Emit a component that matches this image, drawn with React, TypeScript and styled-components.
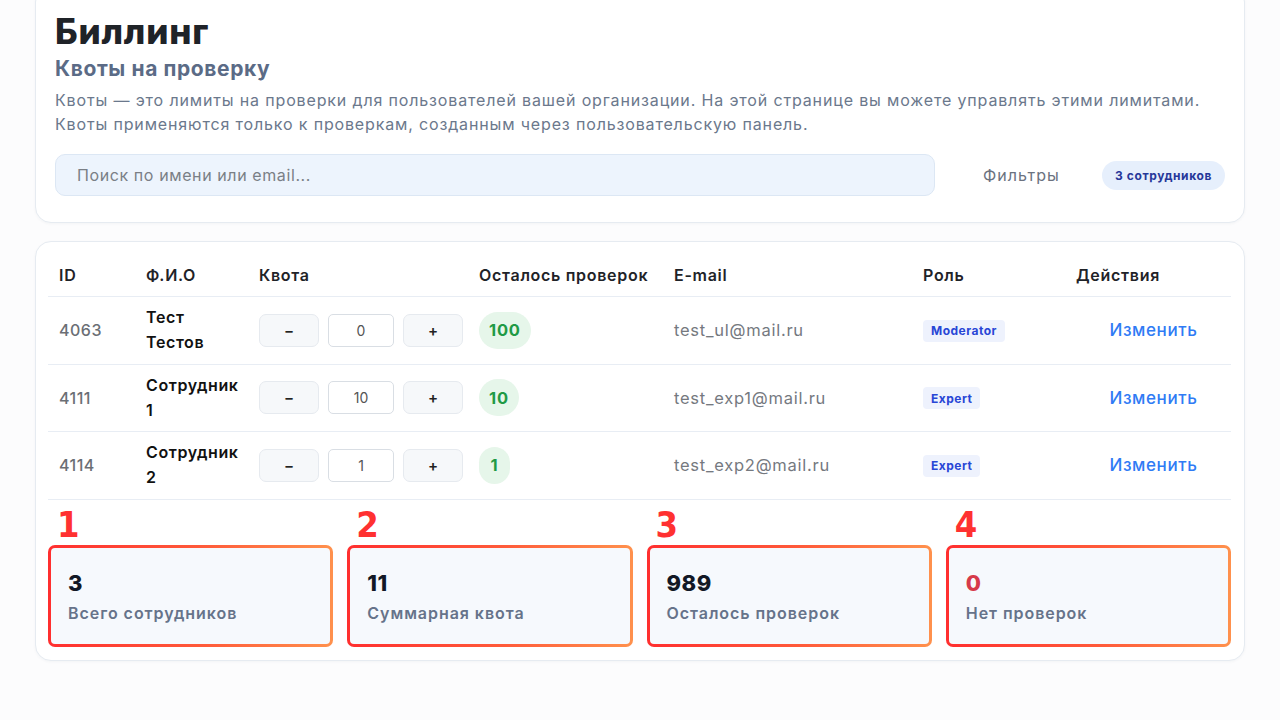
import React from 'react';
import styled, { createGlobalStyle } from 'styled-components';

const GlobalStyle = createGlobalStyle`
  html, body {
    margin: 0;
    padding: 0;
    background: #fcfcfd;
  }
  body {
    font-family: Inter, 'Noto Sans', sans-serif;
    color: #1f2328;
    letter-spacing: 0.5px;
  }
  * { box-sizing: border-box; }
`;

const Page = styled.div`
  padding: 0 35px 40px;
  display: flex;
  flex-direction: column;
  gap: 18px;
  margin-top: -14px;
`;

const Card = styled.section`
  background: #fff;
  border: 1px solid #e6ebf1;
  border-radius: 16px;
  box-shadow: 0 1px 3px rgba(20, 40, 80, 0.04);
`;

const HeaderCard = styled(Card)`
  padding: 23px 19px 26px 19px;
`;

const Title = styled.h1`
  margin: 0;
  font-size: 35px;
  line-height: 42px;
  font-weight: 800;
  letter-spacing: 0.8px;
  color: #1f2328;
`;

const Subtitle = styled.h2`
  margin: 4px 0 0;
  font-size: 21px;
  line-height: 26px;
  font-weight: 700;
  letter-spacing: 0.6px;
  color: #5b6b86;
`;

const Description = styled.p`
  margin: 6px 0 0;
  font-size: 16px;
  line-height: 24px;
  color: #6b788c;
  letter-spacing: 0.85px;
`;

const Toolbar = styled.div`
  margin-top: 18px;
  display: flex;
  align-items: center;
`;

const Search = styled.input`
  flex: 0 0 880px;
  height: 42px;
  border: 1px solid #dce7f4;
  background: #edf4fd;
  border-radius: 10px;
  padding: 0 21px;
  font-family: inherit;
  font-size: 16px;
  letter-spacing: 0.6px;
  color: #333;
  outline: none;
  &::placeholder { color: #7a7f86; }
`;

const FilterLabel = styled.span`
  margin-left: 48px;
  font-size: 16px;
  letter-spacing: 1px;
  color: #6b7280;
`;

const CountBadge = styled.span`
  margin-left: auto;
  background: #e6effc;
  color: #27389a;
  font-weight: 700;
  font-size: 12px;
  letter-spacing: 0.6px;
  padding: 0 13px;
  height: 29px;
  display: inline-flex;
  align-items: center;
  border-radius: 15px;
`;

const TableCard = styled(Card)`
  padding: 12px 13px 13px 12px;
`;

const cols = '87px 113px 220px 195px 249px 153px 1fr';

const HeadRow = styled.div`
  display: grid;
  grid-template-columns: ${cols};
  height: 43px;
  align-items: center;
  border-bottom: 1px solid #e8edf4;
`;

const HeadCell = styled.div`
  padding-left: 11px;
  font-size: 16px;
  font-weight: 600;
  letter-spacing: 0.7px;
  color: #1f2328;
  white-space: nowrap;
`;

const Row = styled.div`
  display: grid;
  grid-template-columns: ${cols};
  height: 67.5px;
  align-items: center;
  border-bottom: 1px solid #e8edf4;
`;

const Cell = styled.div<{ $center?: boolean }>`
  padding-left: 11px;
  font-size: 16px;
  text-align: ${p => (p.$center ? 'center' : 'left')};
`;

const IdCell = styled(Cell)`
  color: #6b6f75;
  font-weight: 500;
`;

const NameCell = styled(Cell)`
  font-weight: 600;
  color: #111;
  line-height: 25px;
  letter-spacing: 0.6px;
`;

const QuotaBox = styled.div`
  display: flex;
  align-items: center;
  gap: 9px;
`;

const StepButton = styled.button`
  width: 60px;
  height: 33px;
  border: 1px solid #e6eaef;
  background: #f6f8fa;
  border-radius: 7px;
  font-family: inherit;
  font-size: 15px;
  font-weight: 600;
  color: #222;
`;

const QuotaInput = styled.input`
  width: 66px;
  height: 33px;
  border: 1px solid #d9dee4;
  border-radius: 5px;
  text-align: center;
  font-family: inherit;
  font-size: 14px;
  color: #555;
  background: #fff;
`;

const Remaining = styled.span`
  display: inline-flex;
  align-items: center;
  justify-content: center;
  min-width: 31px;
  height: 37px;
  padding: 0 10px;
  border-radius: 19px;
  background: #e6f6ea;
  color: #1f9a45;
  font-weight: 700;
  font-size: 16.5px;
  letter-spacing: 0.8px;
`;

const Email = styled(Cell)`
  color: #75797f;
  font-size: 16.5px;
  letter-spacing: 0.75px;
`;

const RoleBadge = styled.span`
  display: inline-flex;
  align-items: center;
  height: 22px;
  padding: 0 8px;
  border-radius: 4px;
  background: #eef2fd;
  color: #2846d6;
  font-weight: 700;
  font-size: 12px;
  letter-spacing: 0.5px;
`;

const EditLink = styled.a`
  color: #2f7bf5;
  font-size: 17px;
  font-weight: 500;
  letter-spacing: 0.6px;
  cursor: pointer;
`;

const Stats = styled.div`
  display: grid;
  grid-template-columns: repeat(4, 1fr);
  gap: 14px;
  padding-top: 7px;
`;

const StatColumn = styled.div`
  display: flex;
  flex-direction: column;
`;

const Marker = styled.span`
  margin-left: 9px;
  font-family: 'DejaVu Sans Condensed', 'DejaVu Sans', sans-serif;
  font-weight: 700;
  font-size: 36px;
  line-height: 36px;
  letter-spacing: 0;
  color: #ff3131;
`;

const StatCard = styled.div`
  margin-top: 2px;
  height: 102px;
  border: 3px solid transparent;
  border-radius: 7px;
  background: linear-gradient(#f6f9fd, #f6f9fd) padding-box,
    linear-gradient(90deg, #ff2f2f, #ff5b3a 55%, #ff914d) border-box;
  padding: 21px 17px;
`;

const StatValue = styled.div<{ $alert?: boolean }>`
  font-size: 22px;
  line-height: 28px;
  font-weight: 800;
  color: ${p => (p.$alert ? '#d63a4a' : '#121826')};
`;

const StatLabel = styled.div`
  margin-top: 6px;
  font-size: 16px;
  font-weight: 600;
  letter-spacing: 0.95px;
  color: #66738a;
`;

const users = [
  { id: 4063, name: ['Тест', 'Тестов'], quota: 0, left: 100, email: 'test_ul@mail.ru', role: 'Moderator' },
  { id: 4111, name: ['Сотрудник', '1'], quota: 10, left: 10, email: 'test_exp1@mail.ru', role: 'Expert' },
  { id: 4114, name: ['Сотрудник', '2'], quota: 1, left: 1, email: 'test_exp2@mail.ru', role: 'Expert' },
];

const stats = [
  { value: '3', label: 'Всего сотрудников' },
  { value: '11', label: 'Суммарная квота' },
  { value: '989', label: 'Осталось проверок' },
  { value: '0', label: 'Нет проверок', alert: true },
];

const App = () => {
  return (
    <>
      <GlobalStyle />
      <Page>
        <HeaderCard>
          <Title>Биллинг</Title>
          <Subtitle>Квоты на проверку</Subtitle>
          <Description>
            Квоты — это лимиты на проверки для пользователей вашей организации. На этой странице вы можете управлять этими лимитами.
            <br />
            Квоты применяются только к проверкам, созданным через пользовательскую панель.
          </Description>
          <Toolbar>
            <Search placeholder="Поиск по имени или email..." />
            <FilterLabel>Фильтры</FilterLabel>
            <CountBadge>3 сотрудников</CountBadge>
          </Toolbar>
        </HeaderCard>

        <TableCard>
          <HeadRow>
            <HeadCell>ID</HeadCell>
            <HeadCell>Ф.И.О</HeadCell>
            <HeadCell>Квота</HeadCell>
            <HeadCell>Осталось проверок</HeadCell>
            <HeadCell>E-mail</HeadCell>
            <HeadCell>Роль</HeadCell>
            <HeadCell>Действия</HeadCell>
          </HeadRow>
          {users.map(u => (
            <Row key={u.id}>
              <IdCell>{u.id}</IdCell>
              <NameCell>
                {u.name[0]}
                <br />
                {u.name[1]}
              </NameCell>
              <Cell>
                <QuotaBox>
                  <StepButton>−</StepButton>
                  <QuotaInput defaultValue={u.quota} />
                  <StepButton>+</StepButton>
                </QuotaBox>
              </Cell>
              <Cell>
                <Remaining>{u.left}</Remaining>
              </Cell>
              <Email>{u.email}</Email>
              <Cell>
                <RoleBadge>{u.role}</RoleBadge>
              </Cell>
              <Cell $center>
                <EditLink>Изменить</EditLink>
              </Cell>
            </Row>
          ))}
          <Stats>
            {stats.map((s, i) => (
              <StatColumn key={s.label}>
                <Marker>{i + 1}</Marker>
                <StatCard>
                  <StatValue $alert={s.alert}>{s.value}</StatValue>
                  <StatLabel>{s.label}</StatLabel>
                </StatCard>
              </StatColumn>
            ))}
          </Stats>
        </TableCard>
      </Page>
    </>
  );
};

export default App;
